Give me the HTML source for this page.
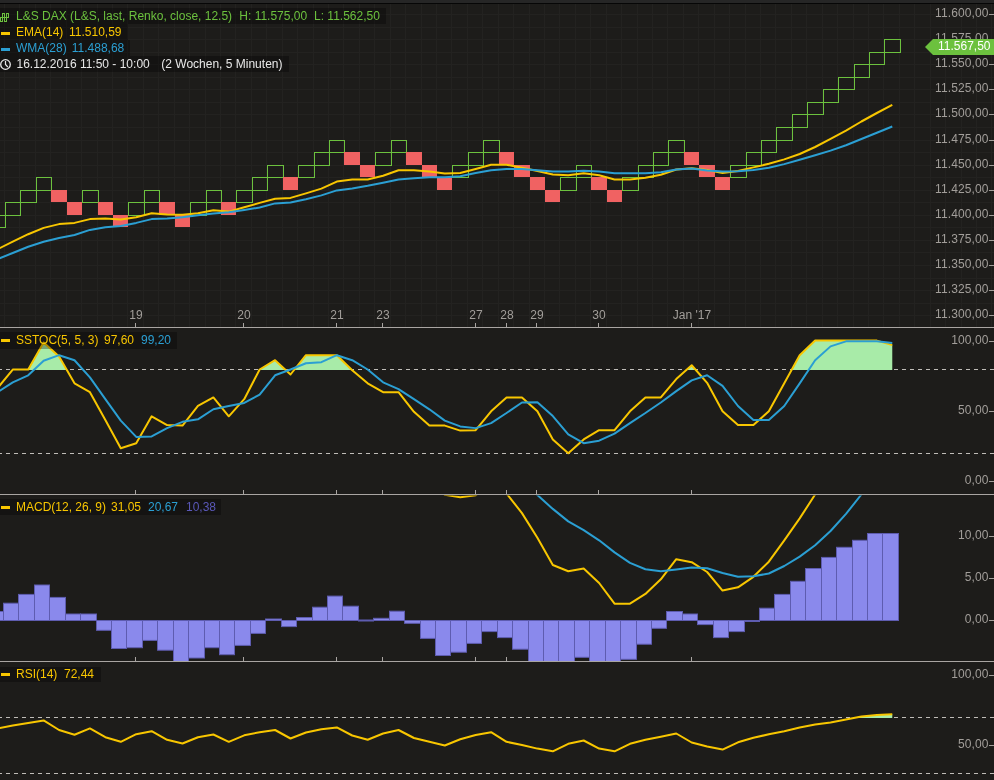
<!DOCTYPE html>
<html><head><meta charset="utf-8"><style>
html,body{margin:0;padding:0;background:#1d1c1a;overflow:hidden;}
svg{display:block;font-family:"Liberation Sans", sans-serif;will-change:transform;}
</style></head><body>
<svg width="994" height="780" viewBox="0 0 994 780">
<rect x="0" y="0" width="994" height="780" fill="#1d1c1a"/>
<rect x="0" y="0" width="994" height="3" fill="#262626"/>
<rect x="0" y="3" width="994" height="1" fill="#060606"/>
<g fill="none" stroke="#232220" stroke-width="1">
<line x1="4.5" y1="4" x2="4.5" y2="327"/>
<line x1="19.5" y1="4" x2="19.5" y2="327"/>
<line x1="35.5" y1="4" x2="35.5" y2="327"/>
<line x1="50.5" y1="4" x2="50.5" y2="327"/>
<line x1="66.5" y1="4" x2="66.5" y2="327"/>
<line x1="81.5" y1="4" x2="81.5" y2="327"/>
<line x1="97.5" y1="4" x2="97.5" y2="327"/>
<line x1="112.5" y1="4" x2="112.5" y2="327"/>
<line x1="127.5" y1="4" x2="127.5" y2="327"/>
<line x1="143.5" y1="4" x2="143.5" y2="327"/>
<line x1="158.5" y1="4" x2="158.5" y2="327"/>
<line x1="174.5" y1="4" x2="174.5" y2="327"/>
<line x1="189.5" y1="4" x2="189.5" y2="327"/>
<line x1="205.5" y1="4" x2="205.5" y2="327"/>
<line x1="220.5" y1="4" x2="220.5" y2="327"/>
<line x1="235.5" y1="4" x2="235.5" y2="327"/>
<line x1="251.5" y1="4" x2="251.5" y2="327"/>
<line x1="266.5" y1="4" x2="266.5" y2="327"/>
<line x1="282.5" y1="4" x2="282.5" y2="327"/>
<line x1="297.5" y1="4" x2="297.5" y2="327"/>
<line x1="313.5" y1="4" x2="313.5" y2="327"/>
<line x1="328.5" y1="4" x2="328.5" y2="327"/>
<line x1="343.5" y1="4" x2="343.5" y2="327"/>
<line x1="359.5" y1="4" x2="359.5" y2="327"/>
<line x1="374.5" y1="4" x2="374.5" y2="327"/>
<line x1="390.5" y1="4" x2="390.5" y2="327"/>
<line x1="405.5" y1="4" x2="405.5" y2="327"/>
<line x1="421.5" y1="4" x2="421.5" y2="327"/>
<line x1="436.5" y1="4" x2="436.5" y2="327"/>
<line x1="451.5" y1="4" x2="451.5" y2="327"/>
<line x1="467.5" y1="4" x2="467.5" y2="327"/>
<line x1="482.5" y1="4" x2="482.5" y2="327"/>
<line x1="498.5" y1="4" x2="498.5" y2="327"/>
<line x1="513.5" y1="4" x2="513.5" y2="327"/>
<line x1="529.5" y1="4" x2="529.5" y2="327"/>
<line x1="544.5" y1="4" x2="544.5" y2="327"/>
<line x1="559.5" y1="4" x2="559.5" y2="327"/>
<line x1="575.5" y1="4" x2="575.5" y2="327"/>
<line x1="590.5" y1="4" x2="590.5" y2="327"/>
<line x1="606.5" y1="4" x2="606.5" y2="327"/>
<line x1="621.5" y1="4" x2="621.5" y2="327"/>
<line x1="637.5" y1="4" x2="637.5" y2="327"/>
<line x1="652.5" y1="4" x2="652.5" y2="327"/>
<line x1="667.5" y1="4" x2="667.5" y2="327"/>
<line x1="683.5" y1="4" x2="683.5" y2="327"/>
<line x1="698.5" y1="4" x2="698.5" y2="327"/>
<line x1="714.5" y1="4" x2="714.5" y2="327"/>
<line x1="729.5" y1="4" x2="729.5" y2="327"/>
<line x1="745.5" y1="4" x2="745.5" y2="327"/>
<line x1="760.5" y1="4" x2="760.5" y2="327"/>
<line x1="775.5" y1="4" x2="775.5" y2="327"/>
<line x1="791.5" y1="4" x2="791.5" y2="327"/>
<line x1="806.5" y1="4" x2="806.5" y2="327"/>
<line x1="822.5" y1="4" x2="822.5" y2="327"/>
<line x1="837.5" y1="4" x2="837.5" y2="327"/>
<line x1="853.5" y1="4" x2="853.5" y2="327"/>
<line x1="868.5" y1="4" x2="868.5" y2="327"/>
<line x1="883.5" y1="4" x2="883.5" y2="327"/>
<line x1="899.5" y1="4" x2="899.5" y2="327"/>
<line x1="914.5" y1="4" x2="914.5" y2="327"/>
<line x1="930.5" y1="4" x2="930.5" y2="327"/>
<line x1="945.5" y1="4" x2="945.5" y2="327"/>
<line x1="961.5" y1="4" x2="961.5" y2="327"/>
<line x1="976.5" y1="4" x2="976.5" y2="327"/>
<line x1="991.5" y1="4" x2="991.5" y2="327"/>
<line x1="0" y1="14.5" x2="994" y2="14.5"/>
<line x1="0" y1="27.5" x2="994" y2="27.5"/>
<line x1="0" y1="39.5" x2="994" y2="39.5"/>
<line x1="0" y1="52.5" x2="994" y2="52.5"/>
<line x1="0" y1="64.5" x2="994" y2="64.5"/>
<line x1="0" y1="77.5" x2="994" y2="77.5"/>
<line x1="0" y1="89.5" x2="994" y2="89.5"/>
<line x1="0" y1="102.5" x2="994" y2="102.5"/>
<line x1="0" y1="114.5" x2="994" y2="114.5"/>
<line x1="0" y1="127.5" x2="994" y2="127.5"/>
<line x1="0" y1="140.5" x2="994" y2="140.5"/>
<line x1="0" y1="152.5" x2="994" y2="152.5"/>
<line x1="0" y1="165.5" x2="994" y2="165.5"/>
<line x1="0" y1="177.5" x2="994" y2="177.5"/>
<line x1="0" y1="190.5" x2="994" y2="190.5"/>
<line x1="0" y1="202.5" x2="994" y2="202.5"/>
<line x1="0" y1="215.5" x2="994" y2="215.5"/>
<line x1="0" y1="227.5" x2="994" y2="227.5"/>
<line x1="0" y1="240.5" x2="994" y2="240.5"/>
<line x1="0" y1="252.5" x2="994" y2="252.5"/>
<line x1="0" y1="265.5" x2="994" y2="265.5"/>
<line x1="0" y1="278.5" x2="994" y2="278.5"/>
<line x1="0" y1="290.5" x2="994" y2="290.5"/>
<line x1="0" y1="303.5" x2="994" y2="303.5"/>
<line x1="0" y1="315.5" x2="994" y2="315.5"/>
</g>
<rect x="-9.5" y="215.5" width="15" height="12" fill="none" stroke="#6cc13e" stroke-width="1"/>
<rect x="5.5" y="202.5" width="15" height="13" fill="none" stroke="#6cc13e" stroke-width="1"/>
<rect x="20.5" y="190.5" width="16" height="12" fill="none" stroke="#6cc13e" stroke-width="1"/>
<rect x="36.5" y="177.5" width="15" height="13" fill="none" stroke="#6cc13e" stroke-width="1"/>
<rect x="51" y="190" width="16" height="12" fill="#f06262"/>
<rect x="67" y="202" width="15" height="13" fill="#f06262"/>
<rect x="82.5" y="190.5" width="16" height="12" fill="none" stroke="#6cc13e" stroke-width="1"/>
<rect x="98" y="202" width="15" height="13" fill="#f06262"/>
<rect x="113" y="215" width="15" height="12" fill="#f06262"/>
<rect x="128.5" y="202.5" width="16" height="13" fill="none" stroke="#6cc13e" stroke-width="1"/>
<rect x="144.5" y="190.5" width="15" height="12" fill="none" stroke="#6cc13e" stroke-width="1"/>
<rect x="159" y="202" width="16" height="13" fill="#f06262"/>
<rect x="175" y="215" width="15" height="12" fill="#f06262"/>
<rect x="190.5" y="202.5" width="16" height="13" fill="none" stroke="#6cc13e" stroke-width="1"/>
<rect x="206.5" y="190.5" width="15" height="12" fill="none" stroke="#6cc13e" stroke-width="1"/>
<rect x="221" y="202" width="15" height="13" fill="#f06262"/>
<rect x="236.5" y="190.5" width="16" height="12" fill="none" stroke="#6cc13e" stroke-width="1"/>
<rect x="252.5" y="177.5" width="15" height="13" fill="none" stroke="#6cc13e" stroke-width="1"/>
<rect x="267.5" y="165.5" width="16" height="12" fill="none" stroke="#6cc13e" stroke-width="1"/>
<rect x="283" y="177" width="15" height="13" fill="#f06262"/>
<rect x="298.5" y="165.5" width="16" height="12" fill="none" stroke="#6cc13e" stroke-width="1"/>
<rect x="314.5" y="152.5" width="15" height="13" fill="none" stroke="#6cc13e" stroke-width="1"/>
<rect x="329.5" y="140.5" width="15" height="12" fill="none" stroke="#6cc13e" stroke-width="1"/>
<rect x="344" y="152" width="16" height="13" fill="#f06262"/>
<rect x="360" y="165" width="15" height="12" fill="#f06262"/>
<rect x="375.5" y="152.5" width="16" height="13" fill="none" stroke="#6cc13e" stroke-width="1"/>
<rect x="391.5" y="140.5" width="15" height="12" fill="none" stroke="#6cc13e" stroke-width="1"/>
<rect x="406" y="152" width="16" height="13" fill="#f06262"/>
<rect x="422" y="165" width="15" height="12" fill="#f06262"/>
<rect x="437" y="177" width="15" height="13" fill="#f06262"/>
<rect x="452.5" y="165.5" width="16" height="12" fill="none" stroke="#6cc13e" stroke-width="1"/>
<rect x="468.5" y="152.5" width="15" height="13" fill="none" stroke="#6cc13e" stroke-width="1"/>
<rect x="483.5" y="140.5" width="16" height="12" fill="none" stroke="#6cc13e" stroke-width="1"/>
<rect x="499" y="152" width="15" height="13" fill="#f06262"/>
<rect x="514" y="165" width="16" height="12" fill="#f06262"/>
<rect x="530" y="177" width="15" height="13" fill="#f06262"/>
<rect x="545" y="190" width="15" height="12" fill="#f06262"/>
<rect x="560.5" y="177.5" width="16" height="13" fill="none" stroke="#6cc13e" stroke-width="1"/>
<rect x="576.5" y="165.5" width="15" height="12" fill="none" stroke="#6cc13e" stroke-width="1"/>
<rect x="591" y="177" width="16" height="13" fill="#f06262"/>
<rect x="607" y="190" width="15" height="12" fill="#f06262"/>
<rect x="622.5" y="177.5" width="16" height="13" fill="none" stroke="#6cc13e" stroke-width="1"/>
<rect x="638.5" y="165.5" width="15" height="12" fill="none" stroke="#6cc13e" stroke-width="1"/>
<rect x="653.5" y="152.5" width="15" height="13" fill="none" stroke="#6cc13e" stroke-width="1"/>
<rect x="668.5" y="140.5" width="16" height="12" fill="none" stroke="#6cc13e" stroke-width="1"/>
<rect x="684" y="152" width="15" height="13" fill="#f06262"/>
<rect x="699" y="165" width="16" height="12" fill="#f06262"/>
<rect x="715" y="177" width="15" height="13" fill="#f06262"/>
<rect x="730.5" y="165.5" width="16" height="12" fill="none" stroke="#6cc13e" stroke-width="1"/>
<rect x="746.5" y="152.5" width="15" height="13" fill="none" stroke="#6cc13e" stroke-width="1"/>
<rect x="761.5" y="140.5" width="15" height="12" fill="none" stroke="#6cc13e" stroke-width="1"/>
<rect x="776.5" y="127.5" width="16" height="13" fill="none" stroke="#6cc13e" stroke-width="1"/>
<rect x="792.5" y="114.5" width="15" height="13" fill="none" stroke="#6cc13e" stroke-width="1"/>
<rect x="807.5" y="102.5" width="16" height="12" fill="none" stroke="#6cc13e" stroke-width="1"/>
<rect x="823.5" y="89.5" width="15" height="13" fill="none" stroke="#6cc13e" stroke-width="1"/>
<rect x="838.5" y="77.5" width="16" height="12" fill="none" stroke="#6cc13e" stroke-width="1"/>
<rect x="854.5" y="64.5" width="15" height="13" fill="none" stroke="#6cc13e" stroke-width="1"/>
<rect x="869.5" y="52.5" width="15" height="12" fill="none" stroke="#6cc13e" stroke-width="1"/>
<rect x="884.5" y="39.5" width="16" height="13" fill="none" stroke="#6cc13e" stroke-width="1"/>
<polyline points="-2.66,249.30 12.77,241.70 28.20,234.20 43.64,227.90 59.06,224.10 74.50,222.90 89.93,219.10 105.36,218.40 120.78,219.60 136.22,217.30 151.65,213.30 167.08,214.60 182.50,214.80 197.94,213.30 213.37,210.30 228.79,211.60 244.22,207.20 259.65,202.90 275.08,198.70 290.51,197.90 305.94,193.40 321.38,188.60 336.80,181.60 352.23,179.50 367.66,179.50 383.09,175.80 398.52,170.20 413.95,170.20 429.38,171.50 444.81,173.50 460.24,173.00 475.67,169.00 491.10,164.70 506.53,164.70 521.97,167.70 537.39,171.00 552.82,174.50 568.25,175.30 583.68,173.30 599.12,175.30 614.54,179.50 629.98,179.50 645.40,177.80 660.83,174.80 676.26,169.50 691.69,168.20 707.12,170.00 722.55,172.90 737.99,171.00 753.41,167.40 768.84,163.80 784.27,159.40 799.70,154.00 815.13,147.00 830.56,138.90 846.00,130.60 861.42,121.50 876.85,113.00 892.28,104.80" fill="none" stroke="#f8c600" stroke-width="2" stroke-linejoin="round"/>
<polyline points="-2.66,259.20 12.77,253.00 28.20,246.80 43.64,241.70 59.06,238.00 74.50,235.00 89.93,229.90 105.36,227.20 120.78,226.10 136.22,222.90 151.65,219.10 167.08,218.40 182.50,217.30 197.94,215.30 213.37,213.60 228.79,212.30 244.22,210.00 259.65,207.50 275.08,203.40 290.51,202.40 305.94,199.20 321.38,195.40 336.80,190.40 352.23,188.40 367.66,185.80 383.09,182.80 398.52,179.50 413.95,178.30 429.38,177.30 444.81,177.30 460.24,176.20 475.67,173.00 491.10,170.20 506.53,169.00 521.97,169.00 537.39,170.20 552.82,171.50 568.25,171.50 583.68,170.70 599.12,171.50 614.54,173.30 629.98,173.30 645.40,173.30 660.83,172.30 676.26,169.50 691.69,168.50 707.12,170.40 722.55,171.50 737.99,171.20 753.41,170.10 768.84,167.80 784.27,164.10 799.70,159.80 815.13,155.30 830.56,150.60 846.00,145.20 861.42,139.00 876.85,132.80 892.28,126.50" fill="none" stroke="#2b9fd3" stroke-width="2" stroke-linejoin="round"/>
<text x="988.5" y="17.0" fill="#a29e9a" font-size="12" letter-spacing="0.1" text-anchor="end">11.600,00</text>
<rect x="989" y="14.0" width="5" height="1" fill="#a29e9a"/>
<text x="988.5" y="42.0" fill="#a29e9a" font-size="12" letter-spacing="0.1" text-anchor="end">11.575,00</text>
<rect x="989" y="39.0" width="5" height="1" fill="#a29e9a"/>
<text x="988.5" y="67.0" fill="#a29e9a" font-size="12" letter-spacing="0.1" text-anchor="end">11.550,00</text>
<rect x="989" y="64.0" width="5" height="1" fill="#a29e9a"/>
<text x="988.5" y="92.0" fill="#a29e9a" font-size="12" letter-spacing="0.1" text-anchor="end">11.525,00</text>
<rect x="989" y="89.0" width="5" height="1" fill="#a29e9a"/>
<text x="988.5" y="117.0" fill="#a29e9a" font-size="12" letter-spacing="0.1" text-anchor="end">11.500,00</text>
<rect x="989" y="114.0" width="5" height="1" fill="#a29e9a"/>
<text x="988.5" y="143.0" fill="#a29e9a" font-size="12" letter-spacing="0.1" text-anchor="end">11.475,00</text>
<rect x="989" y="140.0" width="5" height="1" fill="#a29e9a"/>
<text x="988.5" y="168.0" fill="#a29e9a" font-size="12" letter-spacing="0.1" text-anchor="end">11.450,00</text>
<rect x="989" y="165.0" width="5" height="1" fill="#a29e9a"/>
<text x="988.5" y="193.0" fill="#a29e9a" font-size="12" letter-spacing="0.1" text-anchor="end">11.425,00</text>
<rect x="989" y="190.0" width="5" height="1" fill="#a29e9a"/>
<text x="988.5" y="218.0" fill="#a29e9a" font-size="12" letter-spacing="0.1" text-anchor="end">11.400,00</text>
<rect x="989" y="215.0" width="5" height="1" fill="#a29e9a"/>
<text x="988.5" y="243.0" fill="#a29e9a" font-size="12" letter-spacing="0.1" text-anchor="end">11.375,00</text>
<rect x="989" y="240.0" width="5" height="1" fill="#a29e9a"/>
<text x="988.5" y="268.0" fill="#a29e9a" font-size="12" letter-spacing="0.1" text-anchor="end">11.350,00</text>
<rect x="989" y="265.0" width="5" height="1" fill="#a29e9a"/>
<text x="988.5" y="293.0" fill="#a29e9a" font-size="12" letter-spacing="0.1" text-anchor="end">11.325,00</text>
<rect x="989" y="290.0" width="5" height="1" fill="#a29e9a"/>
<text x="988.5" y="318.0" fill="#a29e9a" font-size="12" letter-spacing="0.1" text-anchor="end">11.300,00</text>
<rect x="989" y="315.0" width="5" height="1" fill="#a29e9a"/>
<path d="M925,47 L933,39 L994,39 L994,55 L933,55 Z" fill="#6cc13e"/>
<text x="990.5" y="49.8" fill="#ffffff" font-size="12" text-anchor="end">11.567,50</text>
<text x="136.0" y="319" fill="#a29e9a" font-size="12" text-anchor="middle">19</text>
<text x="244.0" y="319" fill="#a29e9a" font-size="12" text-anchor="middle">20</text>
<text x="337.0" y="319" fill="#a29e9a" font-size="12" text-anchor="middle">21</text>
<text x="383.0" y="319" fill="#a29e9a" font-size="12" text-anchor="middle">23</text>
<text x="476.0" y="319" fill="#a29e9a" font-size="12" text-anchor="middle">27</text>
<text x="507.0" y="319" fill="#a29e9a" font-size="12" text-anchor="middle">28</text>
<text x="537.0" y="319" fill="#a29e9a" font-size="12" text-anchor="middle">29</text>
<text x="599.0" y="319" fill="#a29e9a" font-size="12" text-anchor="middle">30</text>
<text x="692.0" y="319" fill="#a29e9a" font-size="12" text-anchor="middle">Jan '17</text>
<rect x="0" y="327" width="994" height="1" fill="#a9a5a2"/>
<rect x="0" y="494" width="994" height="1" fill="#a9a5a2"/>
<rect x="0" y="661" width="994" height="1" fill="#a9a5a2"/>
<line x1="135.5" y1="323" x2="135.5" y2="327" stroke="#a9a5a2"/>
<line x1="135.5" y1="490" x2="135.5" y2="494" stroke="#a9a5a2"/>
<line x1="135.5" y1="657" x2="135.5" y2="661" stroke="#a9a5a2"/>
<line x1="243.5" y1="323" x2="243.5" y2="327" stroke="#a9a5a2"/>
<line x1="243.5" y1="490" x2="243.5" y2="494" stroke="#a9a5a2"/>
<line x1="243.5" y1="657" x2="243.5" y2="661" stroke="#a9a5a2"/>
<line x1="336.5" y1="323" x2="336.5" y2="327" stroke="#a9a5a2"/>
<line x1="336.5" y1="490" x2="336.5" y2="494" stroke="#a9a5a2"/>
<line x1="336.5" y1="657" x2="336.5" y2="661" stroke="#a9a5a2"/>
<line x1="382.5" y1="323" x2="382.5" y2="327" stroke="#a9a5a2"/>
<line x1="382.5" y1="490" x2="382.5" y2="494" stroke="#a9a5a2"/>
<line x1="382.5" y1="657" x2="382.5" y2="661" stroke="#a9a5a2"/>
<line x1="475.5" y1="323" x2="475.5" y2="327" stroke="#a9a5a2"/>
<line x1="475.5" y1="490" x2="475.5" y2="494" stroke="#a9a5a2"/>
<line x1="475.5" y1="657" x2="475.5" y2="661" stroke="#a9a5a2"/>
<line x1="506.5" y1="323" x2="506.5" y2="327" stroke="#a9a5a2"/>
<line x1="506.5" y1="490" x2="506.5" y2="494" stroke="#a9a5a2"/>
<line x1="506.5" y1="657" x2="506.5" y2="661" stroke="#a9a5a2"/>
<line x1="536.5" y1="323" x2="536.5" y2="327" stroke="#a9a5a2"/>
<line x1="536.5" y1="490" x2="536.5" y2="494" stroke="#a9a5a2"/>
<line x1="536.5" y1="657" x2="536.5" y2="661" stroke="#a9a5a2"/>
<line x1="598.5" y1="323" x2="598.5" y2="327" stroke="#a9a5a2"/>
<line x1="598.5" y1="490" x2="598.5" y2="494" stroke="#a9a5a2"/>
<line x1="598.5" y1="657" x2="598.5" y2="661" stroke="#a9a5a2"/>
<line x1="691.5" y1="323" x2="691.5" y2="327" stroke="#a9a5a2"/>
<line x1="691.5" y1="490" x2="691.5" y2="494" stroke="#a9a5a2"/>
<line x1="691.5" y1="657" x2="691.5" y2="661" stroke="#a9a5a2"/>
<clipPath id="cst"><rect x="0" y="328.5" width="994" height="165.5"/></clipPath>
<g clip-path="url(#cst)">
<clipPath id="cst80"><rect x="0" y="300" width="994" height="70.0"/></clipPath>
<line x1="0" y1="369.5" x2="994" y2="369.5" stroke="#bfbcb8" stroke-width="1" stroke-dasharray="4,4" stroke-dashoffset="2"/>
<line x1="0" y1="453.5" x2="994" y2="453.5" stroke="#bfbcb8" stroke-width="1" stroke-dasharray="4,4" stroke-dashoffset="2"/>
<polygon points="-2.66,370.0 -2.66,388.38 12.77,369.52 28.20,369.52 43.64,342.61 59.06,356.44 74.50,383.35 89.93,392.15 105.36,420.07 120.78,448.24 136.22,443.21 151.65,416.30 167.08,425.10 182.50,425.60 197.94,405.99 213.37,397.43 228.79,416.30 244.22,399.20 259.65,369.50 275.08,360.20 290.51,374.50 305.94,355.20 321.38,355.20 336.80,355.20 352.23,370.30 367.66,383.30 383.09,392.20 398.52,392.20 413.95,411.80 429.38,425.60 444.81,425.60 460.24,430.60 475.67,430.13 491.10,411.27 506.53,397.43 521.97,397.43 537.39,411.27 552.82,439.44 568.25,453.27 583.68,439.44 599.12,430.13 614.54,430.13 629.98,411.27 645.40,397.43 660.83,397.43 676.26,379.07 691.69,365.24 707.12,382.85 722.55,411.27 737.99,425.10 753.41,425.10 768.84,411.27 784.27,383.35 799.70,355.18 815.13,340.59 830.56,340.59 846.00,340.59 861.42,340.59 876.85,340.59 892.28,345.12 892.28,370.0" fill="#a8eba8" clip-path="url(#cst80)"/>
<polyline points="-2.66,388.38 12.77,369.52 28.20,369.52 43.64,342.61 59.06,356.44 74.50,383.35 89.93,392.15 105.36,420.07 120.78,448.24 136.22,443.21 151.65,416.30 167.08,425.10 182.50,425.60 197.94,405.99 213.37,397.43 228.79,416.30 244.22,399.20 259.65,369.50 275.08,360.20 290.51,374.50 305.94,355.20 321.38,355.20 336.80,355.20 352.23,370.30 367.66,383.30 383.09,392.20 398.52,392.20 413.95,411.80 429.38,425.60 444.81,425.60 460.24,430.60 475.67,430.13 491.10,411.27 506.53,397.43 521.97,397.43 537.39,411.27 552.82,439.44 568.25,453.27 583.68,439.44 599.12,430.13 614.54,430.13 629.98,411.27 645.40,397.43 660.83,397.43 676.26,379.07 691.69,365.24 707.12,382.85 722.55,411.27 737.99,425.10 753.41,425.10 768.84,411.27 784.27,383.35 799.70,355.18 815.13,340.59 830.56,340.59 846.00,340.59 861.42,340.59 876.85,340.59 892.28,345.12" fill="none" stroke="#f8c600" stroke-width="2" stroke-linejoin="round"/>
<polyline points="-2.66,392.40 12.77,382.34 28.20,375.30 43.64,360.71 59.06,355.18 74.50,360.21 89.93,377.31 105.36,399.20 120.78,420.57 136.22,436.92 151.65,436.42 167.08,428.12 182.50,421.83 197.94,419.32 213.37,409.26 228.79,405.99 244.22,402.97 259.65,394.70 275.08,375.30 290.51,369.50 305.94,363.20 321.38,362.20 336.80,355.20 352.23,360.20 367.66,369.50 383.09,382.30 398.52,389.10 413.95,399.20 429.38,409.30 444.81,420.60 460.24,426.40 475.67,428.12 491.10,423.09 506.53,413.03 521.97,402.46 537.39,402.21 552.82,416.05 568.25,434.41 583.68,443.21 599.12,440.69 614.54,433.65 629.98,423.09 645.40,413.03 660.83,402.46 676.26,391.15 691.69,380.33 707.12,375.30 722.55,385.87 737.99,405.99 753.41,420.07 768.84,420.07 784.27,405.99 799.70,383.35 815.13,360.21 830.56,346.38 846.00,341.35 861.42,341.35 876.85,341.35 892.28,343.11" fill="none" stroke="#2b9fd3" stroke-width="2" stroke-linejoin="round"/>
</g>
<text x="988.5" y="344.1" fill="#a29e9a" font-size="12" letter-spacing="0.1" text-anchor="end">100,00</text>
<rect x="989" y="341" width="5" height="1" fill="#a29e9a"/>
<text x="988.5" y="414.1" fill="#a29e9a" font-size="12" letter-spacing="0.1" text-anchor="end">50,00</text>
<rect x="989" y="411" width="5" height="1" fill="#a29e9a"/>
<text x="988.5" y="484.1" fill="#a29e9a" font-size="12" letter-spacing="0.1" text-anchor="end">0,00</text>
<rect x="989" y="481" width="5" height="1" fill="#a29e9a"/>
<clipPath id="cmacd"><rect x="0" y="495.5" width="994" height="165.5"/></clipPath>
<g clip-path="url(#cmacd)">
<rect x="-11.50" y="611.50" width="15.00" height="9.00" fill="#8a89ec" stroke="#5e5cb0" stroke-width="1"/>
<rect x="3.50" y="603.20" width="15.00" height="17.30" fill="#8a89ec" stroke="#5e5cb0" stroke-width="1"/>
<rect x="18.50" y="594.40" width="16.00" height="26.10" fill="#8a89ec" stroke="#5e5cb0" stroke-width="1"/>
<rect x="34.50" y="585.00" width="15.00" height="35.50" fill="#8a89ec" stroke="#5e5cb0" stroke-width="1"/>
<rect x="49.50" y="597.40" width="16.00" height="23.10" fill="#8a89ec" stroke="#5e5cb0" stroke-width="1"/>
<rect x="65.50" y="614.00" width="15.00" height="6.50" fill="#8a89ec" stroke="#5e5cb0" stroke-width="1"/>
<rect x="80.50" y="614.00" width="16.00" height="6.50" fill="#8a89ec" stroke="#5e5cb0" stroke-width="1"/>
<rect x="96.50" y="620.50" width="15.00" height="9.80" fill="#8a89ec" stroke="#5e5cb0" stroke-width="1"/>
<rect x="111.50" y="620.50" width="15.00" height="28.00" fill="#8a89ec" stroke="#5e5cb0" stroke-width="1"/>
<rect x="126.50" y="620.50" width="16.00" height="27.20" fill="#8a89ec" stroke="#5e5cb0" stroke-width="1"/>
<rect x="142.50" y="620.50" width="15.00" height="19.90" fill="#8a89ec" stroke="#5e5cb0" stroke-width="1"/>
<rect x="157.50" y="620.50" width="16.00" height="29.70" fill="#8a89ec" stroke="#5e5cb0" stroke-width="1"/>
<rect x="173.50" y="620.50" width="15.00" height="41.50" fill="#8a89ec" stroke="#5e5cb0" stroke-width="1"/>
<rect x="188.50" y="620.50" width="16.00" height="37.50" fill="#8a89ec" stroke="#5e5cb0" stroke-width="1"/>
<rect x="204.50" y="620.50" width="15.00" height="27.20" fill="#8a89ec" stroke="#5e5cb0" stroke-width="1"/>
<rect x="219.50" y="620.50" width="15.00" height="34.20" fill="#8a89ec" stroke="#5e5cb0" stroke-width="1"/>
<rect x="234.50" y="620.50" width="16.00" height="24.90" fill="#8a89ec" stroke="#5e5cb0" stroke-width="1"/>
<rect x="250.50" y="620.50" width="15.00" height="12.90" fill="#8a89ec" stroke="#5e5cb0" stroke-width="1"/>
<rect x="265.50" y="619.00" width="16.00" height="1.50" fill="#8a89ec" stroke="#5e5cb0" stroke-width="1"/>
<rect x="281.50" y="620.50" width="15.00" height="6.10" fill="#8a89ec" stroke="#5e5cb0" stroke-width="1"/>
<rect x="296.50" y="617.50" width="16.00" height="3.00" fill="#8a89ec" stroke="#5e5cb0" stroke-width="1"/>
<rect x="312.50" y="607.20" width="15.00" height="13.30" fill="#8a89ec" stroke="#5e5cb0" stroke-width="1"/>
<rect x="327.50" y="596.10" width="15.00" height="24.40" fill="#8a89ec" stroke="#5e5cb0" stroke-width="1"/>
<rect x="342.50" y="606.20" width="16.00" height="14.30" fill="#8a89ec" stroke="#5e5cb0" stroke-width="1"/>
<rect x="358.50" y="620.00" width="15.00" height="1.00" fill="#8a89ec" stroke="#5e5cb0" stroke-width="1"/>
<rect x="373.50" y="618.30" width="16.00" height="2.20" fill="#8a89ec" stroke="#5e5cb0" stroke-width="1"/>
<rect x="389.50" y="611.20" width="15.00" height="9.30" fill="#8a89ec" stroke="#5e5cb0" stroke-width="1"/>
<rect x="404.50" y="620.50" width="16.00" height="2.80" fill="#8a89ec" stroke="#5e5cb0" stroke-width="1"/>
<rect x="420.50" y="620.50" width="15.00" height="17.90" fill="#8a89ec" stroke="#5e5cb0" stroke-width="1"/>
<rect x="435.50" y="620.50" width="15.00" height="35.00" fill="#8a89ec" stroke="#5e5cb0" stroke-width="1"/>
<rect x="450.50" y="620.50" width="16.00" height="31.70" fill="#8a89ec" stroke="#5e5cb0" stroke-width="1"/>
<rect x="466.50" y="620.50" width="15.00" height="22.90" fill="#8a89ec" stroke="#5e5cb0" stroke-width="1"/>
<rect x="481.50" y="620.50" width="16.00" height="11.10" fill="#8a89ec" stroke="#5e5cb0" stroke-width="1"/>
<rect x="497.50" y="620.50" width="15.00" height="17.10" fill="#8a89ec" stroke="#5e5cb0" stroke-width="1"/>
<rect x="512.50" y="620.50" width="16.00" height="28.70" fill="#8a89ec" stroke="#5e5cb0" stroke-width="1"/>
<rect x="528.50" y="620.50" width="15.00" height="41.50" fill="#8a89ec" stroke="#5e5cb0" stroke-width="1"/>
<rect x="543.50" y="620.50" width="15.00" height="41.50" fill="#8a89ec" stroke="#5e5cb0" stroke-width="1"/>
<rect x="558.50" y="620.50" width="16.00" height="41.50" fill="#8a89ec" stroke="#5e5cb0" stroke-width="1"/>
<rect x="574.50" y="620.50" width="15.00" height="36.80" fill="#8a89ec" stroke="#5e5cb0" stroke-width="1"/>
<rect x="589.50" y="620.50" width="16.00" height="41.50" fill="#8a89ec" stroke="#5e5cb0" stroke-width="1"/>
<rect x="605.50" y="620.50" width="15.00" height="41.50" fill="#8a89ec" stroke="#5e5cb0" stroke-width="1"/>
<rect x="620.50" y="620.50" width="16.00" height="38.80" fill="#8a89ec" stroke="#5e5cb0" stroke-width="1"/>
<rect x="636.50" y="620.50" width="15.00" height="23.70" fill="#8a89ec" stroke="#5e5cb0" stroke-width="1"/>
<rect x="651.50" y="620.50" width="15.00" height="7.80" fill="#8a89ec" stroke="#5e5cb0" stroke-width="1"/>
<rect x="666.50" y="611.50" width="16.00" height="9.00" fill="#8a89ec" stroke="#5e5cb0" stroke-width="1"/>
<rect x="682.50" y="614.00" width="15.00" height="6.50" fill="#8a89ec" stroke="#5e5cb0" stroke-width="1"/>
<rect x="697.50" y="620.50" width="16.00" height="4.10" fill="#8a89ec" stroke="#5e5cb0" stroke-width="1"/>
<rect x="713.50" y="620.50" width="15.00" height="17.10" fill="#8a89ec" stroke="#5e5cb0" stroke-width="1"/>
<rect x="728.50" y="620.50" width="16.00" height="11.10" fill="#8a89ec" stroke="#5e5cb0" stroke-width="1"/>
<rect x="744.50" y="620.50" width="15.00" height="1.00" fill="#8a89ec" stroke="#5e5cb0" stroke-width="1"/>
<rect x="759.50" y="608.20" width="15.00" height="12.30" fill="#8a89ec" stroke="#5e5cb0" stroke-width="1"/>
<rect x="774.50" y="594.40" width="16.00" height="26.10" fill="#8a89ec" stroke="#5e5cb0" stroke-width="1"/>
<rect x="790.50" y="581.30" width="15.00" height="39.20" fill="#8a89ec" stroke="#5e5cb0" stroke-width="1"/>
<rect x="805.50" y="568.50" width="16.00" height="52.00" fill="#8a89ec" stroke="#5e5cb0" stroke-width="1"/>
<rect x="821.50" y="557.40" width="15.00" height="63.10" fill="#8a89ec" stroke="#5e5cb0" stroke-width="1"/>
<rect x="836.50" y="547.30" width="16.00" height="73.20" fill="#8a89ec" stroke="#5e5cb0" stroke-width="1"/>
<rect x="852.50" y="540.30" width="15.00" height="80.20" fill="#8a89ec" stroke="#5e5cb0" stroke-width="1"/>
<rect x="867.50" y="533.50" width="15.00" height="87.00" fill="#8a89ec" stroke="#5e5cb0" stroke-width="1"/>
<rect x="882.50" y="533.50" width="16.00" height="87.00" fill="#8a89ec" stroke="#5e5cb0" stroke-width="1"/>
<polyline points="429.38,480.00 444.81,494.80 460.24,497.30 475.67,495.30 491.10,482.00 506.53,493.50 521.97,513.10 537.39,537.80 552.82,565.00 568.25,571.20 583.68,568.50 599.12,583.00 614.54,603.70 629.98,603.70 645.40,593.90 660.83,579.30 676.26,559.20 691.69,562.20 707.12,572.00 722.55,590.60 737.99,587.30 753.41,576.80 768.84,561.70 784.27,540.30 799.70,518.40 815.13,494.50 830.56,470.00" fill="none" stroke="#f8c600" stroke-width="2" stroke-linejoin="round"/>
<polyline points="521.97,480.00 537.39,495.00 552.82,508.90 568.25,521.40 583.68,530.20 599.12,540.30 614.54,552.40 629.98,562.90 645.40,569.20 660.83,571.20 676.26,569.50 691.69,567.50 707.12,568.30 722.55,573.00 737.99,576.80 753.41,576.30 768.84,573.50 784.27,566.00 799.70,556.60 815.13,545.30 830.56,531.00 846.00,513.90 861.42,494.50 876.85,475.00" fill="none" stroke="#2b9fd3" stroke-width="2" stroke-linejoin="round"/>
</g>
<text x="988.5" y="539.1" fill="#a29e9a" font-size="12" letter-spacing="0.1" text-anchor="end">10,00</text>
<rect x="989" y="536" width="5" height="1" fill="#a29e9a"/>
<text x="988.5" y="581.1" fill="#a29e9a" font-size="12" letter-spacing="0.1" text-anchor="end">5,00</text>
<rect x="989" y="578" width="5" height="1" fill="#a29e9a"/>
<text x="988.5" y="623.1" fill="#a29e9a" font-size="12" letter-spacing="0.1" text-anchor="end">0,00</text>
<rect x="989" y="620" width="5" height="1" fill="#a29e9a"/>
<clipPath id="crsi"><rect x="0" y="662.5" width="994" height="120"/></clipPath>
<g clip-path="url(#crsi)">
<clipPath id="crsi70"><rect x="0" y="650" width="994" height="68.0"/></clipPath>
<line x1="0" y1="717.5" x2="994" y2="717.5" stroke="#bfbcb8" stroke-width="1" stroke-dasharray="4,4" stroke-dashoffset="2"/>
<line x1="0" y1="773.5" x2="994" y2="773.5" stroke="#bfbcb8" stroke-width="1" stroke-dasharray="4,4" stroke-dashoffset="2"/>
<polygon points="-2.66,718.0 -2.66,728.50 12.77,725.40 28.20,722.90 43.64,720.40 59.06,730.00 74.50,734.70 89.93,728.40 105.36,737.20 120.78,741.80 136.22,734.20 151.65,731.20 167.08,739.80 182.50,743.50 197.94,737.20 213.37,734.50 228.79,741.80 244.22,735.30 259.65,732.20 275.08,730.00 290.51,738.50 305.94,732.50 321.38,729.20 336.80,727.40 352.23,735.50 367.66,739.80 383.09,733.50 398.52,730.00 413.95,738.00 429.38,741.80 444.81,745.50 460.24,739.30 475.67,735.00 491.10,732.20 506.53,741.80 521.97,745.00 537.39,748.60 552.82,751.30 568.25,743.80 583.68,740.50 599.12,748.60 614.54,751.30 629.98,743.80 645.40,739.80 660.83,736.70 676.26,733.50 691.69,742.50 707.12,746.50 722.55,749.60 737.99,742.30 753.41,737.80 768.84,734.30 784.27,731.30 799.70,727.50 815.13,724.50 830.56,722.40 846.00,719.50 861.42,716.50 876.85,715.00 892.28,714.20 892.28,718.0" fill="#a8eba8" clip-path="url(#crsi70)"/>
<polyline points="-2.66,728.50 12.77,725.40 28.20,722.90 43.64,720.40 59.06,730.00 74.50,734.70 89.93,728.40 105.36,737.20 120.78,741.80 136.22,734.20 151.65,731.20 167.08,739.80 182.50,743.50 197.94,737.20 213.37,734.50 228.79,741.80 244.22,735.30 259.65,732.20 275.08,730.00 290.51,738.50 305.94,732.50 321.38,729.20 336.80,727.40 352.23,735.50 367.66,739.80 383.09,733.50 398.52,730.00 413.95,738.00 429.38,741.80 444.81,745.50 460.24,739.30 475.67,735.00 491.10,732.20 506.53,741.80 521.97,745.00 537.39,748.60 552.82,751.30 568.25,743.80 583.68,740.50 599.12,748.60 614.54,751.30 629.98,743.80 645.40,739.80 660.83,736.70 676.26,733.50 691.69,742.50 707.12,746.50 722.55,749.60 737.99,742.30 753.41,737.80 768.84,734.30 784.27,731.30 799.70,727.50 815.13,724.50 830.56,722.40 846.00,719.50 861.42,716.50 876.85,715.00 892.28,714.20" fill="none" stroke="#f8c600" stroke-width="2" stroke-linejoin="round"/>
</g>
<text x="988.5" y="678.1" fill="#a29e9a" font-size="12" letter-spacing="0.1" text-anchor="end">100,00</text>
<rect x="989" y="675" width="5" height="1" fill="#a29e9a"/>
<text x="988.5" y="748.1" fill="#a29e9a" font-size="12" letter-spacing="0.1" text-anchor="end">50,00</text>
<rect x="989" y="745" width="5" height="1" fill="#a29e9a"/>
<rect x="0" y="8" width="386" height="16" fill="rgba(0,0,0,0.3)"/>
<rect x="0" y="24" width="128" height="16" fill="rgba(0,0,0,0.3)"/>
<rect x="0" y="40" width="130" height="16" fill="rgba(0,0,0,0.3)"/>
<rect x="0" y="56" width="289" height="16" fill="rgba(0,0,0,0.3)"/>
<g fill="none" stroke="#6cc13e" stroke-width="1"><rect x="0.5" y="17.5" width="2" height="4"/><rect x="2.5" y="13.5" width="2" height="4"/><rect x="4.5" y="17.5" width="2" height="4" fill="{GREEN}"/><rect x="6.5" y="13.5" width="2" height="4"/></g>
<text x="16" y="20" fill="#6cc13e" font-size="12">L&amp;S DAX (L&amp;S, last, Renko, close, 12.5)</text>
<text x="239.3" y="20" fill="#6cc13e" font-size="12">H: 11.575,00</text>
<text x="314" y="20" fill="#6cc13e" font-size="12">L: 11.562,50</text>
<rect x="1" y="32" width="9" height="3" fill="#f8c600"/>
<text x="16" y="36" fill="#f8c600" font-size="12">EMA(14)</text>
<text x="69" y="36" fill="#f8c600" font-size="12">11.510,59</text>
<rect x="1" y="48" width="9" height="3" fill="#2b9fd3"/>
<text x="16" y="52" fill="#2b9fd3" font-size="12">WMA(28)</text>
<text x="71.8" y="52" fill="#2b9fd3" font-size="12">11.488,68</text>
<circle cx="5.5" cy="64.5" r="4.8" fill="none" stroke="#e8e8e8" stroke-width="1.3"/>
<path d="M5.5,61 L5.5,64.5 L7.8,67" fill="none" stroke="#e8e8e8" stroke-width="1.2"/>
<text x="16.5" y="68" fill="#e8e8e8" font-size="12">16.12.2016 11:50 - 10:00</text>
<text x="161.3" y="68" fill="#e8e8e8" font-size="12">(2 Wochen, 5 Minuten)</text>
<rect x="0" y="332" width="177" height="17" fill="rgba(0,0,0,0.3)"/>
<rect x="1" y="339" width="9" height="3" fill="#f8c600"/>
<text x="16" y="344" fill="#f8c600" font-size="12">SSTOC(5, 5, 3)</text>
<text x="104" y="344" fill="#f8c600" font-size="12">97,60</text>
<text x="141" y="344" fill="#2b9fd3" font-size="12">99,20</text>
<rect x="0" y="499" width="221" height="16" fill="rgba(0,0,0,0.3)"/>
<rect x="1" y="506" width="9" height="3" fill="#f8c600"/>
<text x="16" y="511" fill="#f8c600" font-size="12">MACD(12, 26, 9)</text>
<text x="111" y="511" fill="#f8c600" font-size="12">31,05</text>
<text x="148" y="511" fill="#2b9fd3" font-size="12">20,67</text>
<text x="186" y="511" fill="#5a58b8" font-size="12">10,38</text>
<rect x="0" y="667" width="101" height="15" fill="rgba(0,0,0,0.3)"/>
<rect x="1" y="673" width="9" height="3" fill="#f8c600"/>
<text x="16" y="678" fill="#f8c600" font-size="12">RSI(14)</text>
<text x="64" y="678" fill="#f8c600" font-size="12">72,44</text>
</svg>
</body></html>
